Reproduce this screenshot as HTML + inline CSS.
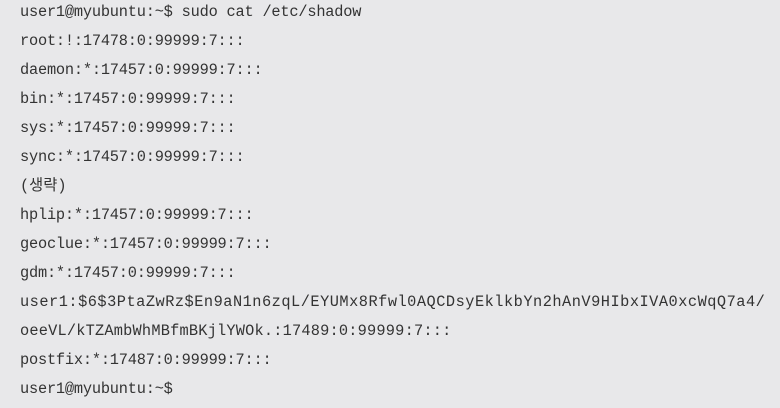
<!DOCTYPE html>
<html><head><style>
html,body{margin:0;padding:0;}
body{width:780px;height:408px;background:#e8e8ea;overflow:hidden;font-family:"Liberation Mono","Noto Sans CJK KR",monospace;font-size:15.3px;color:#333;}
.l{position:absolute;left:20px;white-space:pre;line-height:20px;}
</style></head><body>
<div class="l" style="top:2px;letter-spacing:-0.2px">user1@myubuntu:~$ sudo cat /etc/shadow</div>
<div class="l" style="top:31px;letter-spacing:-0.2px">root:!:17478:0:99999:7:::</div>
<div class="l" style="top:60px;letter-spacing:-0.2px">daemon:*:17457:0:99999:7:::</div>
<div class="l" style="top:89px;letter-spacing:-0.2px">bin:*:17457:0:99999:7:::</div>
<div class="l" style="top:118px;letter-spacing:-0.2px">sys:*:17457:0:99999:7:::</div>
<div class="l" style="top:147px;letter-spacing:-0.2px">sync:*:17457:0:99999:7:::</div>
<div class="l" style="top:176px;">(생략)</div>
<div class="l" style="top:205px;letter-spacing:-0.2px">hplip:*:17457:0:99999:7:::</div>
<div class="l" style="top:234px;letter-spacing:-0.2px">geoclue:*:17457:0:99999:7:::</div>
<div class="l" style="top:263px;letter-spacing:-0.2px">gdm:*:17457:0:99999:7:::</div>
<div class="l" style="top:292px;letter-spacing:0.5px">user1:$6$3PtaZwRz$En9aN1n6zqL/EYUMx8Rfwl0AQCDsyEklkbYn2hAnV9HIbxIVA0xcWqQ7a4/</div>
<div class="l" style="top:321px;letter-spacing:0.2px">oeeVL/kTZAmbWhMBfmBKjlYWOk.:17489:0:99999:7:::</div>
<div class="l" style="top:350px;letter-spacing:-0.2px">postfix:*:17487:0:99999:7:::</div>
<div class="l" style="top:379px;letter-spacing:-0.2px">user1@myubuntu:~$</div>
</body></html>
